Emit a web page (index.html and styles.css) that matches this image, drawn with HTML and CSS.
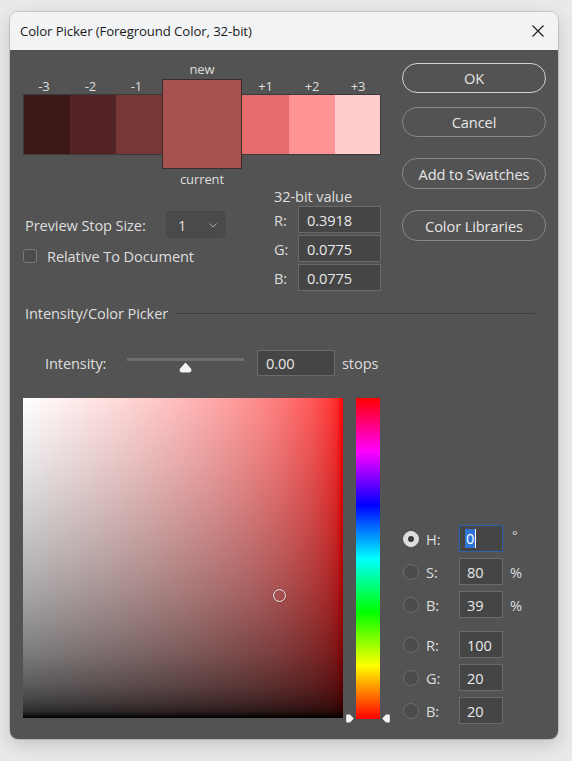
FILE: index.html
```html
<!DOCTYPE html>
<html>
<head>
<meta charset="utf-8">
<link rel="stylesheet" href="styles.css">
</head>
<body>
<div class="window">
  <div class="titlebar">
    <span class="title">Color Picker (Foreground Color, 32-bit)</span>
    <svg class="close" viewBox="0 0 12 12"><path d="M0.5 0.5 L11.5 11.5 M11.5 0.5 L0.5 11.5" stroke="#1b1b1b" stroke-width="1.1" fill="none"/></svg>
  </div>
  <div class="body">
    <div class="top">
      <div class="left">
        <div class="strip">
          <div class="cell w47 first neg"><span class="lbl">-3</span><div class="sw c1"></div><span class="lbl"></span></div>
          <div class="cell w46 neg"><span class="lbl">-2</span><div class="sw c2"></div><span class="lbl"></span></div>
          <div class="cell w46 neg"><span class="lbl">-1</span><div class="sw c3"></div><span class="lbl"></span></div>
          <div class="cell big"><span class="lbl">new</span><div class="sw c4"></div><span class="lbl">current</span></div>
          <div class="cell w47"><span class="lbl">+1</span><div class="sw c5"></div><span class="lbl"></span></div>
          <div class="cell w46"><span class="lbl">+2</span><div class="sw c6"></div><span class="lbl"></span></div>
          <div class="cell w46 last"><span class="lbl">+3</span><div class="sw c7"></div><span class="lbl"></span></div>
        </div>
        <div class="settings">
          <div class="stop">
            <div class="stop-row">
              <span class="stop-lab">Preview Stop Size:</span>
              <div class="select"><span>1</span><svg class="chev" viewBox="0 0 8 5"><path d="M0.5 0.5 L4 4 L7.5 0.5" stroke="#a8a8a8" stroke-width="1" fill="none"/></svg></div>
            </div>
            <div class="check"><span class="box"></span><span>Relative To Document</span></div>
          </div>
          <div class="bits">
            <div class="bits-title">32-bit value</div>
            <div class="bit-row"><span>R:</span><div class="field">0.3918</div></div>
            <div class="bit-row"><span>G:</span><div class="field">0.0775</div></div>
            <div class="bit-row"><span>B:</span><div class="field">0.0775</div></div>
          </div>
        </div>
      </div>
      <div class="buttons">
        <div class="btn ok">OK</div>
        <div class="btn cancel">Cancel</div>
        <div class="btn spaced">Add to Swatches</div>
        <div class="btn spaced">Color Libraries</div>
      </div>
    </div>

    <div class="section-head"><span>Intensity/Color Picker</span><div class="rule"></div></div>

    <div class="intensity">
      <span class="int-label">Intensity:</span>
      <div class="slider">
        <div class="track"></div>
        <svg class="thumb" viewBox="0 0 13 11"><path d="M6.5 0.5 L12.3 7 Q12.8 10.5 10 10.5 L3 10.5 Q0.2 10.5 0.7 7 Z" fill="#f4f4f4"/></svg>
      </div>
      <div class="field int-field">0.00</div>
      <span class="stops">stops</span>
    </div>

    <div class="picker">
      <div class="sq"><div class="marker"></div></div>
      <div class="hue-wrap">
        <div class="hue"></div>
        <svg class="arrow arrow-l" viewBox="0 0 8 9"><path d="M1 0.5 L4 0.5 L7.8 4.5 L4 8.5 L1 8.5 Q0.2 8.5 0.2 7.7 L0.2 1.3 Q0.2 0.5 1 0.5 Z" fill="#f2f2f2"/></svg>
        <svg class="arrow arrow-r" viewBox="0 0 8 9"><path d="M7 0.5 L4 0.5 L0.2 4.5 L4 8.5 L7 8.5 Q7.8 8.5 7.8 7.7 L7.8 1.3 Q7.8 0.5 7 0.5 Z" fill="#f2f2f2"/></svg>
      </div>
      <div class="values">
        <div class="vrow"><span class="radio on"><span class="dot"></span></span><span class="vlab">H:</span><div class="field vfield focus"><span class="sel">0</span></div><span class="unit deg">°</span></div>
        <div class="vrow"><span class="radio"></span><span class="vlab">S:</span><div class="field vfield">80</div><span class="unit">%</span></div>
        <div class="vrow"><span class="radio"></span><span class="vlab">B:</span><div class="field vfield">39</div><span class="unit">%</span></div>
        <div class="vrow group"><span class="radio"></span><span class="vlab">R:</span><div class="field vfield">100</div></div>
        <div class="vrow"><span class="radio"></span><span class="vlab">G:</span><div class="field vfield">20</div></div>
        <div class="vrow"><span class="radio"></span><span class="vlab">B:</span><div class="field vfield">20</div></div>
      </div>
    </div>
  </div>
</div>
</body>
</html>
```

FILE: styles.css
```css
* { box-sizing: border-box; }
html, body { margin: 0; }
body {
  width: 572px;
  height: 761px;
  padding: 12px 0 0 10px;
  background: #e9e9e9;
  font-family: "Open Sans", "Noto Sans", sans-serif;
  overflow: hidden;
}
.window {
  width: 548px;
  height: 727px;
  border-radius: 8px;
  overflow: hidden;
  display: flex;
  flex-direction: column;
  box-shadow: 0 6px 18px rgba(0,0,0,0.16), 0 0 0 1px rgba(0,0,0,0.12);
}
.titlebar {
  height: 38px;
  flex: none;
  background: #f2f3f5;
  display: flex;
  align-items: center;
  justify-content: space-between;
  padding: 0 14px 0 10px;
}
.title { font-size: 13.2px; color: #1b1b1b; letter-spacing: -0.1px; }
.close { width: 12px; height: 12px; }
.body {
  flex: 1;
  background: #535353;
  padding: 9px 12px 0 13px;
  color: #dedede;
  font-size: 14.6px;
  letter-spacing: -0.1px;
}
.top { display: flex; gap: 21px; }
.left { width: 358px; }

.strip { display: flex; align-items: center; height: 130px; }
.cell { display: flex; flex-direction: column; align-items: center; }
.cell .lbl { height: 16px; line-height: 16px; font-size: 13px; color: #dedede; }
.cell.neg .lbl { padding-right: 5px; }
.cell .sw { width: 100%; height: 61px; border-top: 1px solid #3a3a3a; border-bottom: 1px solid #3a3a3a; }
.cell.first .sw { border-left: 1px solid #3a3a3a; }
.cell.last .sw { border-right: 1px solid #3a3a3a; }
.w47 { width: 47px; }
.w46 { width: 46px; }
.cell.big { width: 80px; }
.cell.big .lbl { height: 20px; line-height: 20px; }
.cell.big .sw { height: 90px; border: 1px solid #3a2c2c; }
.c1 { background: #3e1819; }
.c2 { background: #542325; }
.c3 { background: #773737; }
.c4 { background: #a85151; }
.c5 { background: #e46c6c; }
.c6 { background: #ff9494; }
.c7 { background: #ffcdcd; }

.settings { display: flex; }
.stop { width: 251px; padding-top: 22px; }
.stop-row { display: flex; align-items: center; height: 27px; padding-left: 2px; }
.stop-lab { width: 141px; }
.select {
  width: 59px;
  height: 27px;
  background: #4a4a4a;
  border: 1px solid #474747;
  border-radius: 4px;
  display: flex;
  align-items: center;
  justify-content: space-between;
  padding: 0 7px 0 11px;
}
.chev { width: 8px; height: 5px; margin-top: 2px; }
.check { display: flex; align-items: center; gap: 10px; margin-top: 11px; height: 14px; }
.box { width: 14px; height: 14px; border: 1px solid #7a7a7a; border-radius: 3px; background: #4c4c4c; flex: none; }

.bits { width: 107px; }
.bits-title { height: 17px; line-height: 15px; }
.bit-row { display: flex; align-items: center; justify-content: space-between; height: 27px; margin-top: 2px; }
.bits-title + .bit-row { margin-top: 0; }
.field {
  background: #454545;
  border: 1px solid #6a6a6a;
  padding-left: 8px;
  color: #e8e8e8;
  display: flex;
  align-items: center;
}
.bit-row .field { width: 83px; height: 27px; }

.buttons { display: flex; flex-direction: column; width: 144px; margin-top: 4px; }
.btn {
  height: 30px;
  border: 1px solid #878787;
  border-radius: 15px;
  display: flex;
  align-items: center;
  justify-content: center;
  color: #e6e6e6;
}
.btn.ok { border: 1.5px solid #d4d4d4; }
.btn.cancel { margin-top: 14px; }
.btn.spaced { margin-top: 21px; height: 31px; }

.section-head { display: flex; align-items: center; gap: 8px; height: 18px; margin-top: 13px; margin-right: 11px; padding-left: 2px; }
.rule { flex: 1; height: 1px; background: #3d3d3d; }

.intensity { display: flex; align-items: center; height: 26px; margin-top: 28px; padding-left: 22px; }
.int-label { width: 82px; }
.slider { width: 117px; height: 26px; position: relative; }
.track { height: 3px; margin-top: 8px; background: #6e6e6e; }
.thumb { position: absolute; left: 52px; top: 12px; width: 13px; height: 11px; }
.int-field { width: 78px; height: 26px; margin-left: 13px; }
.stops { margin-left: 7px; }

.picker { display: flex; margin-top: 22px; }
.sq {
  width: 320px;
  height: 320px;
  position: relative;
  flex: none;
  background:
    linear-gradient(to bottom,
      rgba(0,0,0,0) 0%,
      rgba(0,0,0,0.047) 10%,
      rgba(0,0,0,0.096) 20%,
      rgba(0,0,0,0.150) 30%,
      rgba(0,0,0,0.207) 40%,
      rgba(0,0,0,0.270) 50%,
      rgba(0,0,0,0.341) 60%,
      rgba(0,0,0,0.422) 70%,
      rgba(0,0,0,0.519) 80%,
      rgba(0,0,0,0.649) 90%,
      rgba(0,0,0,0.744) 95%,
      rgba(0,0,0,0.831) 98%,
      rgba(0,0,0,1) 100%),
    linear-gradient(to right,
      rgb(255,255,255) 0%,
      rgb(255,243,243) 10%,
      rgb(255,230,230) 20%,
      rgb(255,217,217) 30%,
      rgb(255,202,202) 40%,
      rgb(255,186,186) 50%,
      rgb(255,168,168) 60%,
      rgb(255,148,148) 70%,
      rgb(255,123,123) 80%,
      rgb(255,89,89) 90%,
      rgb(255,65,65) 95%,
      rgb(255,43,43) 98%,
      rgb(255,0,0) 100%);
}
.marker {
  position: absolute;
  left: 250px;
  top: 191px;
  width: 13px;
  height: 13px;
  border-radius: 50%;
  border: 1px solid #f0f0f0;
  box-shadow: 0 0 0 0.5px rgba(0,0,0,0.35);
}
.hue-wrap { position: relative; width: 24px; height: 321px; margin-left: 13px; flex: none; }
.hue { height: 100%; background: linear-gradient(to bottom, #f00, #f0f, #00f, #0ff, #0f0, #ff0, #f00); }
.arrow { position: absolute; top: 316px; width: 8px; height: 9px; }
.arrow-l { left: -10px; }
.arrow-r { right: -10px; }

.values { margin-left: 23px; padding-top: 127px; }
.vrow { display: flex; align-items: center; height: 27px; margin-top: 6px; }
.vrow:first-child { margin-top: 0; }
.vrow.group { margin-top: 13px; }
.radio {
  width: 16px;
  height: 16px;
  border-radius: 50%;
  border: 1px solid #6c6c6c;
  background: #4b4b4b;
  flex: none;
  display: flex;
  align-items: center;
  justify-content: center;
}
.radio.on { background: #dedede; border-color: #dedede; }
.dot { width: 6px; height: 6px; border-radius: 50%; background: #3a3a3a; }
.vlab { width: 33px; margin-left: 7px; }
.vfield { width: 44px; height: 27px; padding-left: 7px; }
.vfield.focus { border-color: #2e62ad; padding-left: 5px; }
.sel { background: #2f74d6; color: #fff; padding: 0 1px; line-height: 19px; border-right: 1px solid #fff; }
.unit { margin-left: 7px; }
.unit.deg { margin-left: 9px; margin-top: -8px; font-size: 13px; }
```
